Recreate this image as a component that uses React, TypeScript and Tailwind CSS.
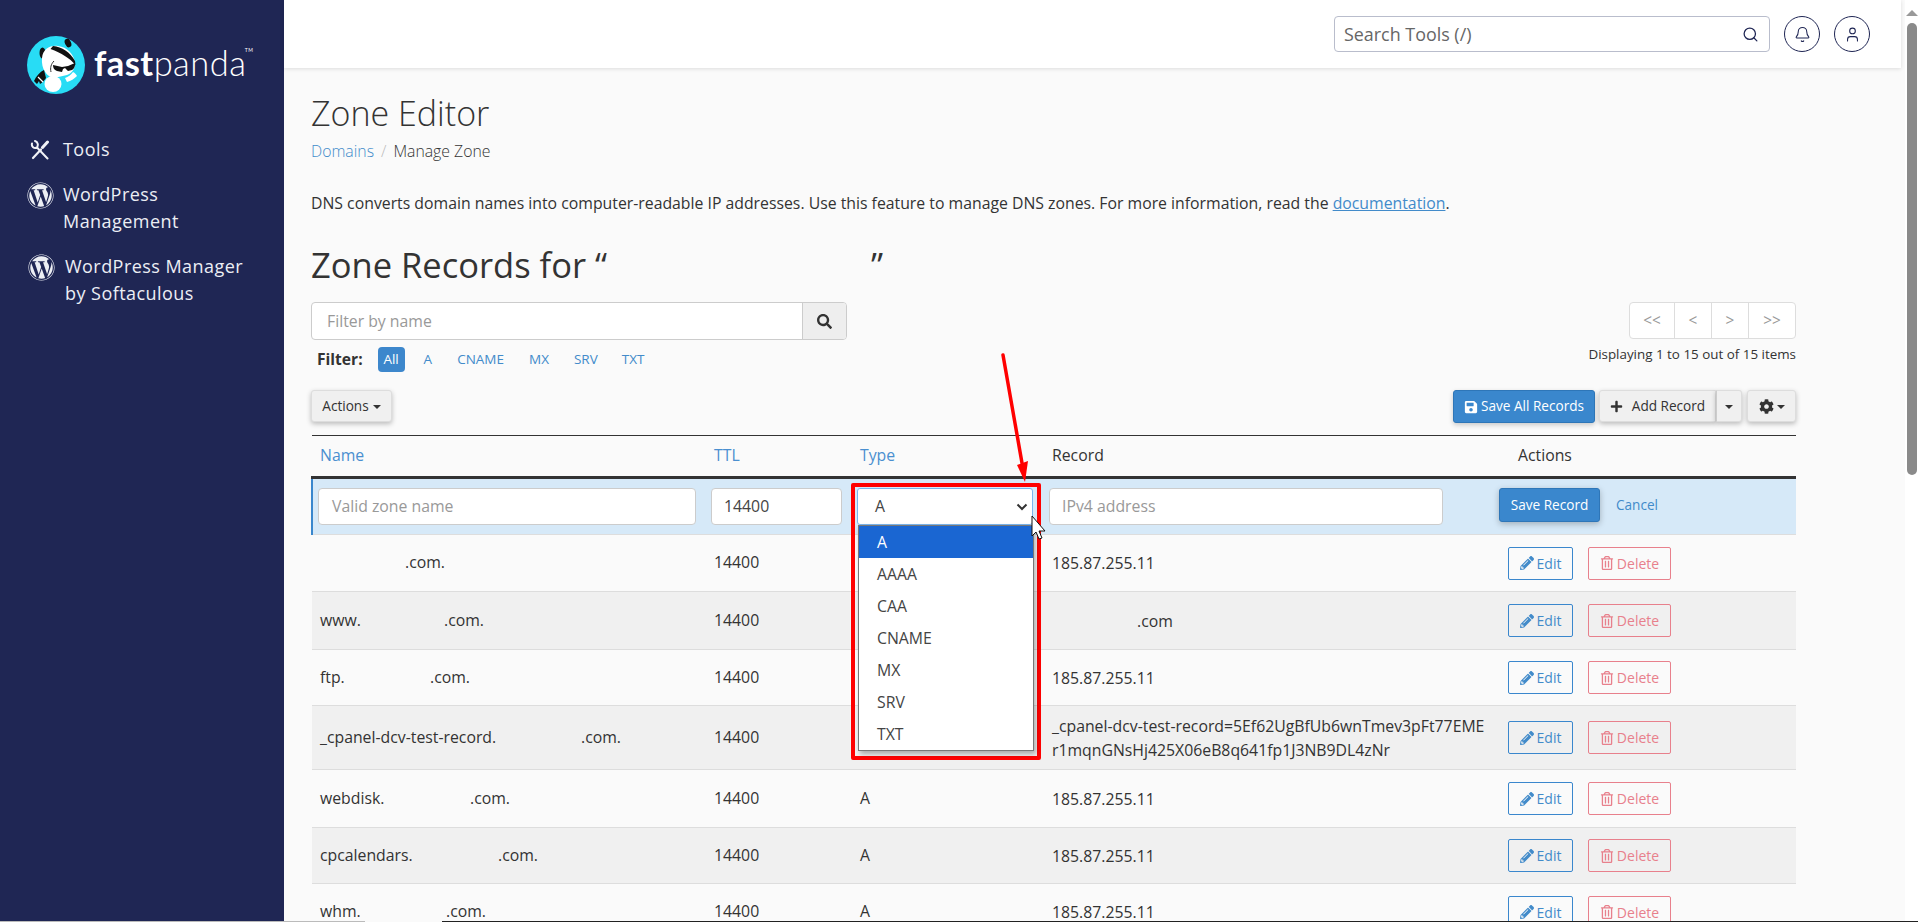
import { Bell, Search, User } from 'lucide-react';
import { FaCog, FaPencilAlt, FaPlus, FaRegTrashAlt, FaSave, FaSearch, FaWordpress } from 'react-icons/fa';

interface Row {
  prefix: string;
  gap: string;
  record: string[];
  h: string;
  type?: string;
  recordGap?: boolean;
}

const ROWS: Row[] = [
  { prefix: '', gap: 'w-[85px]', record: ['185.87.255.11'], h: 'h-[57px]' },
  { prefix: 'www.', gap: 'w-[124px]', record: ['.com'], h: 'h-[58px]', recordGap: true },
  { prefix: 'ftp.', gap: 'w-[110px]', record: ['185.87.255.11'], h: 'h-[56px]' },
  {
    prefix: '_cpanel-dcv-test-record.',
    gap: 'w-[261px]',
    record: ['_cpanel-dcv-test-record=5Ef62UgBfUb6wnTmev3pFt77EME', 'r1mqnGNsHj425X06eB8q641fp1J3NB9DL4zNr'],
    h: 'h-[64px]',
  },
  { prefix: 'webdisk.', gap: 'w-[150px]', record: ['185.87.255.11'], h: 'h-[58px]', type: 'A' },
  { prefix: 'cpcalendars.', gap: 'w-[178px]', record: ['185.87.255.11'], h: 'h-[56px]', type: 'A' },
  { prefix: 'whm.', gap: 'w-[126px]', record: ['185.87.255.11'], h: 'h-[57px]', type: 'A' },
];

const FILTERS = [
  { label: 'A', cls: 'ml-[19px]' },
  { label: 'CNAME', cls: 'ml-[25px]' },
  { label: 'MX', cls: 'ml-[25px]' },
  { label: 'SRV', cls: 'ml-[25px]' },
  { label: 'TXT', cls: 'ml-[24px]' },
];

const OPTIONS = ['AAAA', 'CAA', 'CNAME', 'MX', 'SRV', 'TXT'];

function Logo() {
  return (
    <div className="flex items-center h-[58px] ml-[27px] mt-[36px]">
      <svg width="58" height="58" viewBox="0 0 58 58" className="shrink-0">
        <circle cx="29" cy="29" r="29" fill="#28dcf5" />
        {/* ears */}
        <ellipse cx="15.5" cy="17" rx="3" ry="5.5" fill="#111" />
        <ellipse cx="41" cy="7" rx="3" ry="4.5" fill="#111" transform="rotate(-25 41 7)" />
        {/* head */}
        <path d="M15 22C16 13 23 9 31 10c9 1 16 8 17 17 0 6-3 10-8 12l-13 3c-7-1-13-9-12-20z" fill="#fff" />
        {/* helmet band */}
        <path d="M26 10c9 1 17 6 22 15l.5 4c-6-7-14-12-25-16z" fill="#111" />
        {/* helmet rim */}
        <path d="M24 36c-1-4 0-8 3-11" fill="none" stroke="#333" strokeWidth="1" />
        {/* sunglasses */}
        <path d="M26 29l9 2 6-1 7-3c.5 3-1 6-3 7l-4 1-3-3-2 1-1 3-5-1c-3-1-4-3-4-6z" fill="#111" />
        {/* body */}
        <ellipse cx="26" cy="48" rx="8.5" ry="8" fill="#fff" />
        {/* left arm */}
        <path d="M17 34c-4 2-8 6-10 11l3 3 2-3 1 3c2-1 4-3 6-6z" fill="#111" />
        <path d="M11 41l5 5" stroke="#fff" strokeWidth="1.2" />
        {/* right paw */}
        <path d="M46 36c2 1 3 2 4 4-3 3-6 5-10 6l-2-4c3-1 6-3 8-6z" fill="#fff" />
      </svg>
      <div className="relative ml-[9px] text-white text-[34.5px] leading-none font-['Lato',sans-serif] -mt-[4px]">
        <span className="font-bold">fast</span>
        <span className="font-light">panda</span>
        <span className="absolute -right-[7px] top-[2px] text-[5px]">TM</span>
      </div>
    </div>
  );
}

function ToolsIcon() {
  return (
    <svg width="20" height="20" viewBox="0 0 20 20" fill="none" stroke="#f1f2f6" strokeLinecap="round" className="shrink-0">
      <path d="M17.5 2 12.5 7.5" strokeWidth="3" />
      <path d="M11 9.5 3 18" strokeWidth="2.2" />
      <path d="M2 3.5C1.2 6.5 4 9 7 7.5L17.5 18.5M5 1c3 1 3.5 4 2 6.5" strokeWidth="2" />
    </svg>
  );
}

function Sidebar() {
  return (
    <aside className="w-[284px] shrink-0 bg-[#1f2654] text-[#eceef4] text-[18px] leading-[27px] tracking-[0.45px]">
      <Logo />
      <div className="flex items-center ml-[30px] mt-[42px] h-[27px]">
        <ToolsIcon />
        <span className="ml-[13px]">Tools</span>
      </div>
      <div className="flex ml-[27px] mt-[18px]">
        <FaWordpress className="shrink-0 mt-[1px]" size={27} />
        <span className="ml-[9px] w-[150px]">WordPress Management</span>
      </div>
      <div className="flex ml-[28px] mt-[18px]">
        <FaWordpress className="shrink-0 mt-[1px]" size={27} />
        <span className="ml-[10px] w-[200px]">WordPress Manager by Softaculous</span>
      </div>
    </aside>
  );
}

function Header() {
  return (
    <header className="h-[68px] shrink-0 mr-[4px] bg-white shadow-[0_1px_4px_rgba(0,0,0,0.12)] flex items-center justify-end pr-[31px] gap-[14px] relative z-10">
      <div className="w-[436px] h-[36px] border border-[#b9bdcc] rounded-[4px] flex items-center pl-[9px] pr-[9px]">
        <span className="flex-1 text-[17.9px] text-[#666]">Search Tools (/)</span>
        <Search size={17} strokeWidth={1.8} className="text-[#1f2654] mr-[1px]" />
      </div>
      <div className="w-[36px] h-[36px] rounded-full border border-[#1f2654] flex items-center justify-center">
        <Bell size={17} strokeWidth={1.5} className="text-[#1f2654]" />
      </div>
      <div className="w-[36px] h-[36px] rounded-full border border-[#1f2654] flex items-center justify-center">
        <User size={17} strokeWidth={1.5} className="text-[#1f2654]" />
      </div>
    </header>
  );
}

function Toolbar() {
  return (
    <div className="relative">
      <div className="flex h-[38px] w-[536px] border border-[#ccc] rounded-[4px] bg-white">
        <span className="flex-1 pl-[15px] leading-[36px] text-[#999]">Filter by name</span>
        <span className="w-[44px] bg-[#eee] border-l border-[#ccc] rounded-r-[3px] flex items-center justify-center text-[#333]">
          <FaSearch size={15} />
        </span>
      </div>
      <div className="flex items-center h-[25px] mt-[7px] ml-[6px] text-[13.5px] text-[#428bca]">
        <b className="text-[#333] text-[15.6px] font-bold mr-[15px]">Filter:</b>
        <span className="bg-[#3d87cc] text-white rounded-[4px] w-[27px] h-[25px] flex items-center justify-center">All</span>
        {FILTERS.map((f) => (
          <span key={f.label} className={f.cls}>{f.label}</span>
        ))}
      </div>
      <div className="absolute right-0 top-0 flex flex-col items-end">
        <div className="flex h-[37px] border border-[#ddd] rounded-[4px] bg-white text-[#999] text-[15.4px]">
          <span className="w-[45px] flex items-center justify-center border-r border-[#ddd]">&lt;&lt;</span>
          <span className="w-[37px] flex items-center justify-center border-r border-[#ddd]">&lt;</span>
          <span className="w-[37px] flex items-center justify-center border-r border-[#ddd]">&gt;</span>
          <span className="w-[46px] flex items-center justify-center">&gt;&gt;</span>
        </div>
        <div className="text-[13.4px] leading-[18px] mt-[6px] text-[#333]">Displaying 1 to 15 out of 15 items</div>
      </div>
    </div>
  );
}

function ActionsBar() {
  const btn = 'bg-[#f0f0f0] border border-[#ddd] shadow-[0_2px_5px_rgba(0,0,0,0.25)] flex items-center justify-center text-[#333]';
  return (
    <div className="flex items-start h-[33px] mt-[18px] text-[13.6px]">
      <div className={`${btn} w-[81px] h-[32px] rounded-[3px]`}>
        Actions
        <span className="ml-[4px] mt-[2px] border-x-[4px] border-x-transparent border-t-[4px] border-t-[#333]" />
      </div>
      <div className="ml-auto w-[142px] h-[33px] rounded-[3px] bg-[#3a87cd] border border-[#2e76b8] text-white flex items-center justify-center shadow-[0_2px_5px_rgba(0,0,0,0.2)]">
        <FaSave size={14} className="mr-[3px]" />
        Save All Records
      </div>
      <div className={`${btn} ml-[4px] w-[117px] h-[32px] rounded-l-[3px]`}>
        <FaPlus size={13} className="mr-[9px]" />
        Add Record
      </div>
      <div className={`${btn} w-[26px] h-[32px] rounded-r-[3px] border-l-[#ccc]`}>
        <span className="mt-[2px] border-x-[4px] border-x-transparent border-t-[4px] border-t-[#333]" />
      </div>
      <div className={`${btn} ml-[5px] w-[49px] h-[32px] rounded-[3px]`}>
        <FaCog size={15} />
        <span className="ml-[3px] mt-[2px] border-x-[4px] border-x-transparent border-t-[4px] border-t-[#333]" />
      </div>
    </div>
  );
}

function RecordTable() {
  const input = 'h-[37px] border border-[#ccc] rounded-[4px] bg-white flex items-center';
  return (
    <table className="w-full table-fixed border-collapse mt-[12px] border-t border-[#333] text-[#333]">
      <colgroup>
        <col className="w-[394px]" />
        <col className="w-[146px]" />
        <col className="w-[192px]" />
        <col className="w-[456px]" />
        <col />
      </colgroup>
      <thead>
        <tr className="h-[42px] border-b-[3px] border-[#333]">
          <th className="pl-[8px] text-left font-normal text-[#4a8fd0]">Name</th>
          <th className="pl-[8px] text-left font-normal text-[#4a8fd0]">TTL</th>
          <th className="pl-[8px] text-left font-normal text-[#4a8fd0]">Type</th>
          <th className="pl-[8px] text-left font-normal">Record</th>
          <th className="pl-[18px] text-left font-normal">Actions</th>
        </tr>
      </thead>
      <tbody>
        <tr className="h-[57px] bg-[#d6e9f8] border-b border-[#ddd]">
          <td className="pl-[5px] pr-[10px] border-l-2 border-[#3a87cd]">
            <div className={`${input} px-[13px] text-[#999]`}>Valid zone name</div>
          </td>
          <td className="pl-[5px] pr-[10px]">
            <div className={`${input} px-[12px] text-[#444]`}>14400</div>
          </td>
          <td className="pl-[6px] pr-[10px]">
            <div className="h-[37px]" />
          </td>
          <td className="pl-[5px] pr-[57px]">
            <div className={`${input} px-[12px] text-[#999]`}>IPv4 address</div>
          </td>
          <td>
            <div className="flex items-center -mt-[3px] -ml-px">
              <span className="w-[101px] h-[34px] bg-[#3a87cd] border border-[#2e76b8] rounded-[3px] text-white text-[13.6px] flex items-center justify-center shadow-[0_2px_6px_rgba(0,0,0,0.25)]">Save Record</span>
              <span className="ml-[16px] text-[13.6px] text-[#428bca]">Cancel</span>
            </div>
          </td>
        </tr>
        {ROWS.map((row, i) => (
          <tr key={row.prefix} className={`${row.h} border-b border-[#ddd] ${i % 2 === 0 ? 'bg-[#fafafa]' : 'bg-[#f0f0f0]'}`}>
            <td className="pl-[8px]">
              <span className={`inline-block ${row.gap}`}>{row.prefix}</span>.com.
            </td>
            <td className="pl-[8px]">14400</td>
            <td className="pl-[8px]">{row.type}</td>
            <td className="pl-[8px] leading-[24px]">
              {row.recordGap && <span className="inline-block w-[85px]" />}
              {row.record.map((line) => (
                <span key={line} className={row.recordGap ? '' : 'block'}>{line}</span>
              ))}
            </td>
            <td className="pl-[8px]">
              <div className="flex text-[14px]">
                <span className="w-[65px] h-[33px] border border-[#3a87cd] rounded-[2px] text-[#428bca] flex items-center justify-center">
                  <FaPencilAlt size={14} className="mr-[3px]" />
                  Edit
                </span>
                <span className="ml-[15px] w-[83px] h-[33px] border border-[#e8808c] rounded-[2px] text-[#e8808c] flex items-center justify-center">
                  <FaRegTrashAlt size={14} className="mr-[3px]" />
                  Delete
                </span>
              </div>
            </td>
          </tr>
        ))}
      </tbody>
    </table>
  );
}

function Scrollbar() {
  return (
    <div className="w-[13px] shrink-0 bg-white flex flex-col items-center">
      <span className="mt-[10px] border-x-[6px] border-x-transparent border-b-[6px] border-b-[#999]" />
      <span className="mt-[7px] w-[10px] h-[452px] rounded-full bg-[#8a8a8a]" />
    </div>
  );
}

// red marking drawn on top of the screenshot, with the open select list
function Annotation() {
  return (
    <>
      <div className="absolute left-[851px] top-[483px] w-[190px] h-[277px] border-[4px] border-[#f00] rounded-[2px]" />
      <div className="absolute left-[857px] top-[488px] w-[176px] h-[37px] bg-white border border-[#7ab5ec] rounded-[3px] flex items-center pl-[17px] text-[#444]">
        A
        <svg width="12" height="8" viewBox="0 0 12 8" className="absolute right-[4px] top-[14px]" fill="none" stroke="#333" strokeWidth="2">
          <path d="M1.5 1.5 6 6l4.5-4.5" />
        </svg>
      </div>
      <div className="absolute left-[858px] top-[525px] w-[176px] h-[226px] bg-white border border-[#777] shadow-[2px_3px_5px_rgba(0,0,0,0.3)] text-[#444]">
        <div className="h-[32px] bg-[#1a66d2] text-white pl-[18px] leading-[32px]">A</div>
        {OPTIONS.map((o) => (
          <div key={o} className="h-[32px] pl-[18px] leading-[32px]">{o}</div>
        ))}
      </div>
      <svg className="absolute left-[990px] top-[350px]" width="50" height="140" viewBox="0 0 50 140" fill="none">
        <path d="M13 5 32 113" stroke="#f00" strokeWidth="3.5" strokeLinecap="round" />
        <path d="M27 115 38 111 35 132z" fill="#f00" />
      </svg>
      <svg className="absolute left-[1030px] top-[514px]" width="18" height="28" viewBox="0 0 18 28">
        <path d="M2 2v20l4-4 3 7 3-1-3-7h6z" fill="#fff" stroke="#111" strokeWidth="1" />
      </svg>
    </>
  );
}

export default function App() {
  return (
    <div className="relative flex h-[922px] w-full overflow-hidden bg-[#fafafa] font-['Open_Sans',sans-serif] text-[15.8px] text-[#333]">
      <Sidebar />
      <div className="flex-1 min-w-0 flex flex-col">
        <Header />
        <main className="flex-1 pl-[27px] pr-[109px] pt-[21px] overflow-hidden">
          <h1 className="text-[34px] leading-[48px] font-light text-[#333]">Zone Editor</h1>
          <div className="flex leading-[22px] font-light mt-[3px]">
            <span className="text-[#428bca]">Domains</span>
            <span className="mx-[7px] text-[#bbb]">/</span>
            <span>Manage Zone</span>
          </div>
          <p className="leading-[22px] mt-[30px]">
            DNS converts domain names into computer-readable IP addresses. Use this feature to manage DNS zones. For more information, read the{' '}
            <span className="text-[#428bca] underline">documentation</span>.
          </p>
          <h2 className="text-[34.5px] leading-[44px] mt-[29px] mb-[15px] flex">
            <span>Zone Records for “</span>
            <span className="ml-[264px]">”</span>
          </h2>
          <Toolbar />
          <ActionsBar />
          <RecordTable />
        </main>
      </div>
      <Scrollbar />
      <Annotation />
      <div className="absolute left-[442px] right-0 bottom-0 h-px bg-[#222]" />
      <div className="absolute left-0 w-[365px] bottom-0 h-px bg-[#bbb]" />
    </div>
  );
}
